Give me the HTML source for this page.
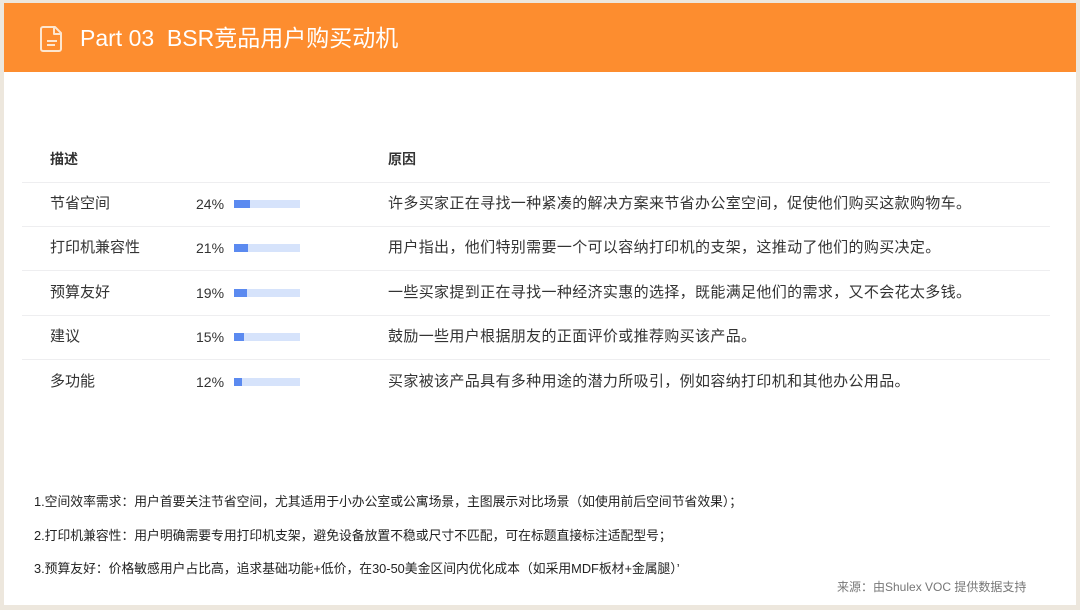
<!DOCTYPE html>
<html><head><meta charset="utf-8"><style>
body{margin:0;width:1080px;height:610px;background:#ede7dd;font-family:"Liberation Sans","Noto Sans CJK SC",sans-serif;overflow:hidden;position:relative}
.page{position:absolute;left:4px;top:3px;width:1072px;height:602px;background:#fff}
.hd{position:absolute;left:0;top:0;width:1072px;height:69px;background:#fd8d2f;color:#fff;font-size:23px}
.hd span{position:absolute;left:76px;top:20px;line-height:30px}
.t{position:absolute;font-size:15px;color:#333;line-height:20px}
.r{letter-spacing:0.35px}
.line{position:absolute;left:18px;width:1028px;height:1px;background:#eeeef0}
.bar{position:absolute;left:230px;width:66px;height:8px;background:#d6e3fb}
.bar i{display:block;height:8px;background:#5b8af0}
.n{position:absolute;left:30px;font-size:12.8px;color:#222;line-height:18px}
</style></head><body><div class="page">
<div class="hd">
<svg style="position:absolute;left:35px;top:22px" width="26" height="28" viewBox="0 0 26 28" fill="none" stroke="#fde6cf" stroke-width="2" stroke-linejoin="round"><path d="M4 2h12l6 6v16a2 2 0 0 1-2 2H4a2 2 0 0 1-2-2V4a2 2 0 0 1 2-2z"/><path d="M15 2v7h7"/><path d="M8 16h10M8 20h8"/></svg>
<span>Part 03&nbsp;&nbsp;BSR竞品用户购买动机</span></div>
<div class="t" style="left:46px;top:146px;font-weight:bold;font-size:14px">描述</div>
<div class="t" style="left:384px;top:146px;font-weight:bold;font-size:14px">原因</div>
<div class="line" style="top:179px"></div>
<div class="t" style="left:46px;top:191px">节省空间</div><div class="t" style="left:192px;top:191px;font-size:14px">24%</div><div class="bar" style="top:197px"><i style="width:16px"></i></div><div class="t r" style="left:384px;top:191px">许多买家正在寻找一种紧凑的解决方案来节省办公室空间，促使他们购买这款购物车。</div>
<div class="line" style="top:223px"></div>
<div class="t" style="left:46px;top:235px">打印机兼容性</div><div class="t" style="left:192px;top:235px;font-size:14px">21%</div><div class="bar" style="top:241px"><i style="width:14px"></i></div><div class="t r" style="left:384px;top:235px">用户指出，他们特别需要一个可以容纳打印机的支架，这推动了他们的购买决定。</div>
<div class="line" style="top:267px"></div>
<div class="t" style="left:46px;top:280px">预算友好</div><div class="t" style="left:192px;top:280px;font-size:14px">19%</div><div class="bar" style="top:286px"><i style="width:13px"></i></div><div class="t r" style="left:384px;top:280px">一些买家提到正在寻找一种经济实惠的选择，既能满足他们的需求，又不会花太多钱。</div>
<div class="line" style="top:312px"></div>
<div class="t" style="left:46px;top:324px">建议</div><div class="t" style="left:192px;top:324px;font-size:14px">15%</div><div class="bar" style="top:330px"><i style="width:10px"></i></div><div class="t r" style="left:384px;top:324px">鼓励一些用户根据朋友的正面评价或推荐购买该产品。</div>
<div class="line" style="top:356px"></div>
<div class="t" style="left:46px;top:369px">多功能</div><div class="t" style="left:192px;top:369px;font-size:14px">12%</div><div class="bar" style="top:375px"><i style="width:8px"></i></div><div class="t r" style="left:384px;top:369px">买家被该产品具有多种用途的潜力所吸引，例如容纳打印机和其他办公用品。</div>
<div class="n" style="top:490px">1.空间效率需求：用户首要关注节省空间，尤其适用于小办公室或公寓场景，主图展示对比场景（如使用前后空间节省效果）；</div>
<div class="n" style="top:524px">2.打印机兼容性：用户明确需要专用打印机支架，避免设备放置不稳或尺寸不匹配，可在标题直接标注适配型号；</div>
<div class="n" style="top:557px">3.预算友好：价格敏感用户占比高，追求基础功能+低价，在30-50美金区间内优化成本（如采用MDF板材+金属腿）’</div>
<div class="n" style="left:833px;top:575px;font-size:12px;color:#777">来源：由Shulex VOC 提供数据支持</div>
</div></body></html>
